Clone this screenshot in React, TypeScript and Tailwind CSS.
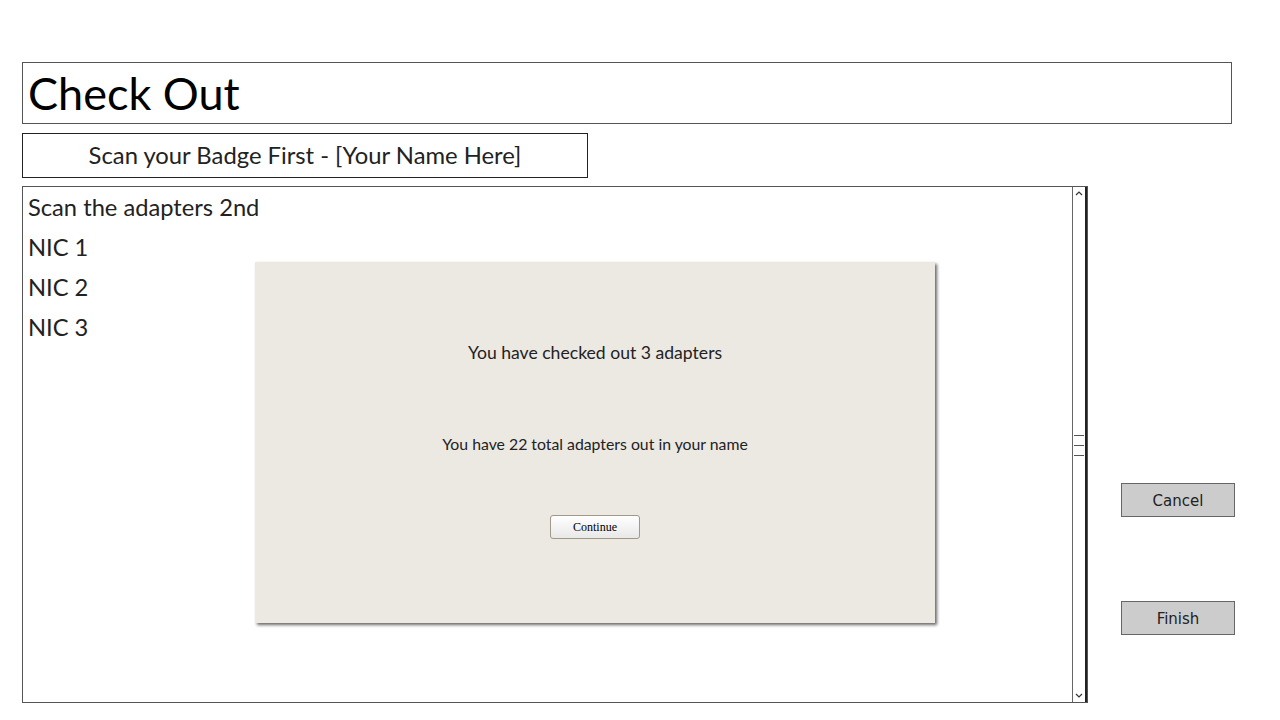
const App = () => {
  const items = ["Scan the adapters 2nd", "NIC 1", "NIC 2", "NIC 3"];

  return (
    <div className="w-[1280px] h-[720px] bg-white relative overflow-hidden" style={{ fontFamily: "Lato, 'Noto Sans', sans-serif" }}>
      <div className="pt-[62px] pl-[22px]">
        {/* Title */}
        <div className="w-[1210px] h-[62px] border border-[#555] flex items-center pl-[5px]">
          <span className="text-[45px] leading-none text-black">Check Out</span>
        </div>

        {/* Badge */}
        <div className="mt-[9px] w-[566px] h-[45px] border border-[#222] flex items-center justify-center">
          <span className="text-[23.8px] leading-none text-[#222]">Scan your Badge First - [Your Name Here]</span>
        </div>

        <div className="mt-[8px] flex">
          {/* List */}
          <div className="relative w-[1066px] h-[517px] border border-[#555] flex">
            <div className="flex-1 pl-[5px] pt-[5px] flex flex-col">
              {items.map((t, i) => (
                <div key={i} className="h-[40px] text-[23.7px] leading-[30px] text-[#222]">{t}</div>
              ))}
            </div>
            {/* Scrollbar */}
            <div className="w-[15px] h-full border-l border-[#666] border-r-2 border-r-[#222] flex flex-col items-center justify-between py-[2px]">
              <svg width="10" height="8" viewBox="0 0 10 8">
                <path d="M2 6 L5 3 L8 6" fill="none" stroke="#333" strokeWidth="1.2" />
              </svg>
              <div className="flex flex-col gap-[9px] mt-[2px]">
                <div className="w-[10px] h-[1px] bg-[#555]" />
                <div className="w-[10px] h-[1px] bg-[#555]" />
                <div className="w-[10px] h-[1px] bg-[#555]" />
              </div>
              <svg width="10" height="8" viewBox="0 0 10 8">
                <path d="M2 2 L5 5 L8 2" fill="none" stroke="#333" strokeWidth="1.2" />
              </svg>
            </div>

            {/* Modal overlay */}
            <div className="absolute left-[232px] top-[75px] w-[680px] h-[361px] bg-[#ece9e3] shadow-[2px_2px_3px_rgba(0,0,0,0.6)] flex flex-col items-center">
              <div className="mt-[80px] text-[17.6px] leading-[22px] text-[#222]">You have checked out 3 adapters</div>
              <div className="mt-[70px] text-[15.8px] leading-[20px] text-[#222]">You have 22 total adapters out in your name</div>
              <button
                className="mt-[61px] w-[90px] h-[24px] rounded-[3px] border border-[#a09888] bg-gradient-to-b from-white to-[#e8e8e8] text-[12px] text-black"
                style={{ fontFamily: "'Liberation Serif', serif" }}
              >
                Continue
              </button>
            </div>
          </div>

          {/* Buttons */}
          <div className="ml-[33px] flex flex-col" style={{ fontFamily: "'DejaVu Sans', sans-serif" }}>
            <button className="mt-[297px] w-[114px] h-[34px] pt-[3px] bg-[#cccccc] border border-[#666] text-[15px] text-[#222]">
              Cancel
            </button>
            <button className="mt-[84px] w-[114px] h-[34px] pt-[3px] bg-[#cccccc] border border-[#666] text-[15px] text-[#222]">
              Finish
            </button>
          </div>
        </div>
      </div>
    </div>
  );
};

export default App;
